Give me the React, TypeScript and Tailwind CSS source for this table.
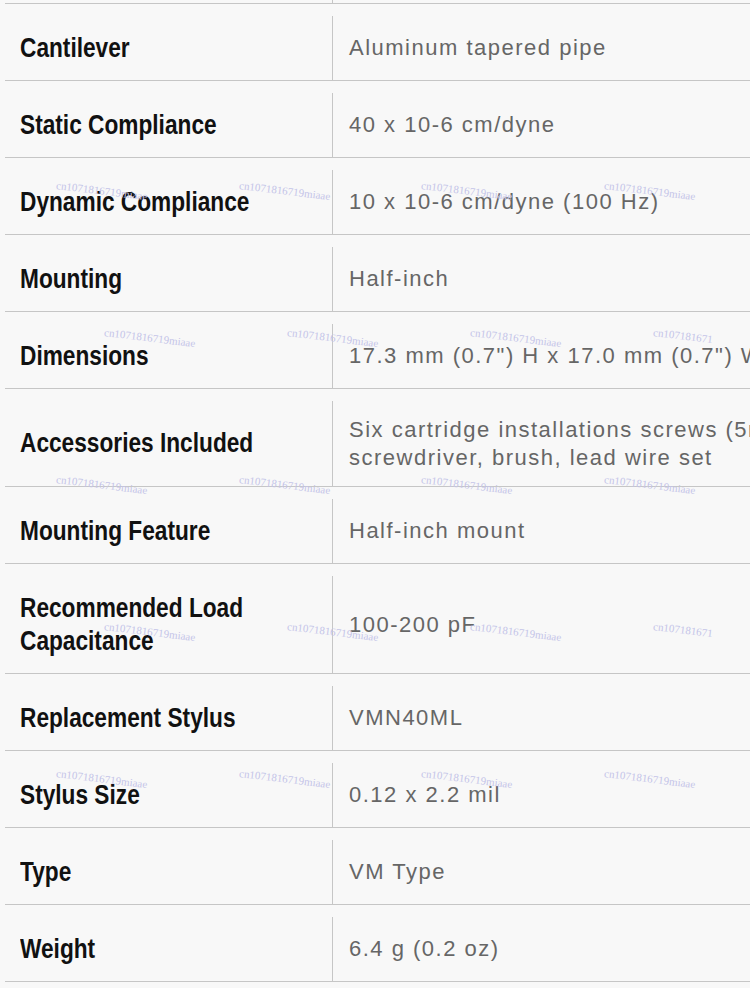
import React from "react";

type Row = { label: React.ReactNode; value: React.ReactNode; h: string };

const rows: Row[] = [
  { label: "Cantilever", value: "Aluminum tapered pipe", h: "h-[77px]" },
  { label: "Static Compliance", value: "40 x 10-6 cm/dyne", h: "h-[77px]" },
  { label: "Dynamic Compliance", value: "10 x 10-6 cm/dyne (100 Hz)", h: "h-[77px]" },
  { label: "Mounting", value: "Half-inch", h: "h-[77px]" },
  {
    label: "Dimensions",
    value: '17.3 mm (0.7") H x 17.0 mm (0.7") W x 27.2 mm (1.1") D',
    h: "h-[77px]",
  },
  {
    label: "Accessories Included",
    value: (
      <>
        Six cartridge installations screws (5mm, 8mm, 10mm),
        <br />
        screwdriver, brush, lead wire set
      </>
    ),
    h: "h-[98px]",
  },
  { label: "Mounting Feature", value: "Half-inch mount", h: "h-[77px]" },
  {
    label: (
      <>
        Recommended Load
        <br />
        Capacitance
      </>
    ),
    value: "100-200 pF",
    h: "h-[110px]",
  },
  { label: "Replacement Stylus", value: "VMN40ML", h: "h-[77px]" },
  { label: "Stylus Size", value: "0.12 x 2.2 mil", h: "h-[77px]" },
  { label: "Type", value: "VM Type", h: "h-[77px]" },
  { label: "Weight", value: "6.4 g (0.2 oz)", h: "h-[77px]" },
];

const marks: { x: number; y: number; t: string }[] = [];
const full = "cn1071816719miaae";
[179, 473, 767].forEach((y) => {
  [57, 240, 422, 605].forEach((x) => marks.push({ x, y, t: full }));
});
[326, 620].forEach((y) => {
  [105, 288, 471].forEach((x) => marks.push({ x, y, t: full }));
  marks.push({ x: 654, y, t: "cn107181671" });
});

export default function App() {
  return (
    <div className="relative w-[750px] h-[988px] overflow-hidden bg-[#f8f8f8]">
      <div className="ml-[5px] flex h-[4px] border-b border-[#c6c6c6]">
        <div className="w-[327px] shrink-0" />
        <div className="border-l border-[#c6c6c6]" />
      </div>
      {rows.map((r, i) => (
        <div
          key={i}
          className={`ml-[5px] flex ${r.h} border-b border-[#c6c6c6] pt-[12px]`}
        >
          <div className="w-[327px] shrink-0 flex items-center pl-[15px]">
            <div
              className="origin-left scale-x-[0.84] whitespace-nowrap text-[27px] leading-[33px] font-bold text-[#111]"
              style={{ fontFamily: '"Liberation Sans", Arial, sans-serif' }}
            >
              {r.label}
            </div>
          </div>
          <div className="flex-1 flex items-center border-l border-[#c6c6c6] pl-[16px]">
            <div
              className="whitespace-nowrap text-[22px] leading-[28px] tracking-[1.5px] text-[#666666]"
              style={{ fontFamily: '"Liberation Sans", Arial, sans-serif' }}
            >
              {r.value}
            </div>
          </div>
        </div>
      ))}
      <div className="pointer-events-none absolute inset-0">
        {marks.map((m, i) => (
          <div
            key={i}
            className="absolute origin-top-left rotate-[7deg] whitespace-nowrap text-[11px] leading-[13px] text-[#c4c4e8]"
            style={{ left: m.x, top: m.y, fontFamily: '"Liberation Serif", "Times New Roman", serif' }}
          >
            {m.t}
          </div>
        ))}
      </div>
    </div>
  );
}
